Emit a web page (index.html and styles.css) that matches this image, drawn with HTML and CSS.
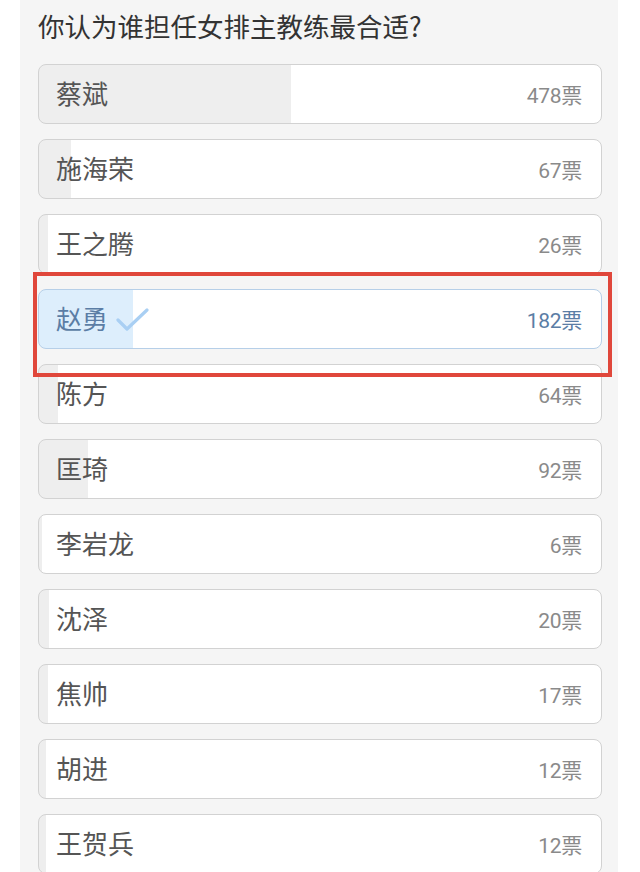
FILE: index.html
```html
<!DOCTYPE html>
<html lang="zh-CN">
<head>
<meta charset="utf-8">
<title>投票</title>
<link rel="stylesheet" href="styles.css">
</head>
<body>
<div class="panel">
  <h1 class="title">你认为谁担任女排主教练最合适?</h1>
  <ul class="options">
    <li class="option" style="--p:44.8%"><span class="name">蔡斌</span><span class="count">478票</span></li>
    <li class="option" style="--p:5.7%"><span class="name">施海荣</span><span class="count">67票</span></li>
    <li class="option" style="--p:1.6%"><span class="name">王之腾</span><span class="count">26票</span></li>
    <li class="option selected" style="--p:16.7%"><span class="name">赵勇<svg class="check" width="34" height="24" viewBox="0 0 34 24"><polyline points="2,12 11,21 31,2" fill="none" stroke="#a9cff3" stroke-width="3.2" stroke-linecap="round" stroke-linejoin="round"/></svg></span><span class="count">182票</span></li>
    <li class="option" style="--p:3.4%"><span class="name">陈方</span><span class="count">64票</span></li>
    <li class="option" style="--p:8.7%"><span class="name">匡琦</span><span class="count">92票</span></li>
    <li class="option" style="--p:0.6%"><span class="name">李岩龙</span><span class="count">6票</span></li>
    <li class="option" style="--p:1.8%"><span class="name">沈泽</span><span class="count">20票</span></li>
    <li class="option" style="--p:1.6%"><span class="name">焦帅</span><span class="count">17票</span></li>
    <li class="option" style="--p:1.2%"><span class="name">胡进</span><span class="count">12票</span></li>
    <li class="option" style="--p:1.2%"><span class="name">王贺兵</span><span class="count">12票</span></li>
  </ul>
</div>
</body>
</html>
```
FILE: styles.css
```css
* { box-sizing: border-box; }
html, body { margin: 0; padding: 0; background: #ffffff; }
body {
  font-family: Roboto, "Noto Sans CJK SC", sans-serif;
  width: 640px;
  height: 872px;
  overflow: hidden;
}
.panel {
  margin-left: 20px;
  width: 598px;
  min-height: 872px;
  background: #f5f5f5;
  padding: 8px 16px 0 18px;
}
.title {
  margin: 0 0 20px 0;
  font-family: "Noto Sans CJK SC", sans-serif;
  font-weight: 400;
  font-size: 26.5px;
  line-height: 36px;
  color: #333333;
}
.options {
  list-style: none;
  margin: 0;
  padding: 0;
  display: flex;
  flex-direction: column;
  gap: 15px;
}
.option {
  height: 60px;
  border: 1px solid #d2d2d2;
  border-radius: 8px;
  background: linear-gradient(to right, #eeeeee var(--p), #ffffff var(--p));
  display: flex;
  align-items: center;
  justify-content: space-between;
  padding: 0 19px 0 17px;
}
.name {
  font-family: "Noto Sans CJK SC", sans-serif;
  font-size: 26px;
  color: #555555;
  display: flex;
  align-items: center;
  padding-bottom: 3px;
}
.count {
  font-size: 21px;
  color: #8a8a8a;
  letter-spacing: -0.3px;
  padding-bottom: 1px;
}
.selected {
  position: relative;
  border-color: #b6cfe8;
  background: linear-gradient(to right, #ddeefc var(--p), #ffffff var(--p));
}
.selected .name, .selected .count { color: #5b7da5; }
.selected::after {
  content: "";
  position: absolute;
  left: -6px;
  top: -18px;
  right: -11px;
  bottom: -29px;
  border: 4px solid #e0473b;
  pointer-events: none;
}
.check { margin-left: 8px; margin-top: 4px; }
```
